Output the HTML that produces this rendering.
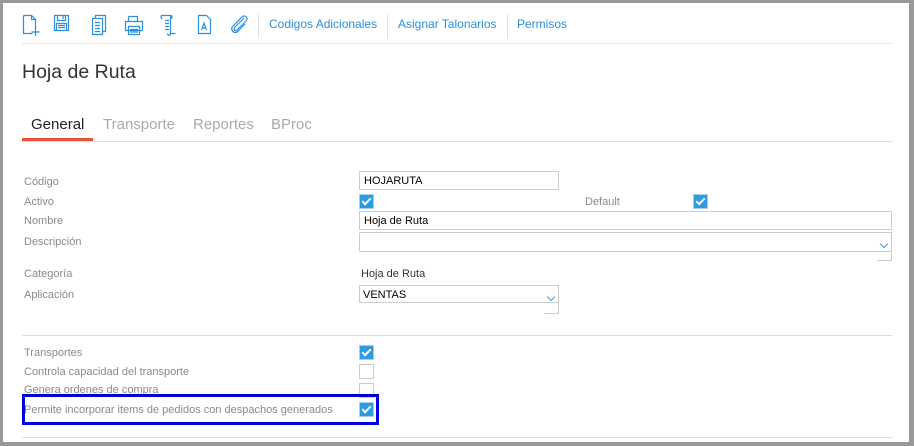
<!DOCTYPE html><html><head><meta charset="utf-8"><style>
body{margin:0;width:914px;height:446px;position:relative;overflow:hidden;background:#fff;font-family:"Liberation Sans",sans-serif}
.a{position:absolute}
.lbl{position:absolute;left:24px;font-size:11px;color:#8a8a8a}
.lnk{position:absolute;top:17px;font-size:12px;color:#2b8ee0}
.sep{position:absolute;top:14px;width:1px;height:24px;background:#e2e2e2}
.cb{position:absolute;width:13px;height:13px;border:1px solid #ccc;background:#fff}
.cb.on{background:#2d9be0;border-color:#a9cfe8}
.cb.on:after{content:"";position:absolute;left:4px;top:1px;width:3px;height:7px;border:solid #fff;border-width:0 2px 2px 0;transform:rotate(45deg)}
.inp{position:absolute;border:1px solid #ccc;font-size:11px;color:#000;box-sizing:border-box;padding:3px 4px}
.chev{position:absolute;width:5px;height:5px;border:solid #4a9ae0;border-width:0 1px 1px 0;transform:rotate(45deg)}
</style></head><body>
<div class="a" style="left:0;top:0;width:914px;height:3px;background:#999"></div>
<div class="a" style="left:0;top:0;width:3px;height:446px;background:#999"></div>
<div class="a" style="right:0;top:0;width:5px;height:446px;background:#999"></div>
<div class="a" style="left:0;top:442px;width:914px;height:4px;background:#999"></div>

<svg class="a" style="left:20px;top:12px" width="240" height="26" viewBox="0 0 240 26" fill="none" stroke="#2b8ee0" stroke-width="1.2">
<path d="M3.5 3.5h8l4 4v9M3.5 3.5v18h9M11.5 3.5v4h4M15.5 16v8M11.5 20h8"/>
<path d="M34.5 3.5h14v15h-14zM37.5 3.5v5h8v-5M43 4v3M36.5 11.5h10v7h-10zM38 13.5h7M38 15.5h7"/>
<path d="M72.5 6.5h10v16h-10zM75.5 6.5v-3h10v16h-3M75 10.5h5M75 13.5h5M75 16.5h5M75 19.5h5"/>
<path d="M108.5 4.5h9v5M108.5 9.5v-5M105.5 9.5h17v9h-17zM108.5 14.5h11v8h-11zM110 17.5h8M110 20h8"/>
<path d="M142.5 3.5h8v18h5M142.5 3.5c-2 0-2 3 0 3M150.5 3.5c2 0 2 3 0 3M150.5 21.5c0 2 -3 2 -3 0M145 8.5h4M145 11.5h4M145 14.5h4M145 17.5h4"/>
<path d="M178.5 3.5h8l4 4v14h-12zM181.5 18l2.5-7 2.5 7M182.3 16h3.4"/>
<path d="M224 6l-9 9c-2 2 0 5 2 3l9-9c3-3-1-7-4-4l-9 9c-4 4 2 9 5 5l7-7"/>
</svg>
<div class="sep" style="left:258px"></div>
<div class="lnk" style="left:269px">Codigos Adicionales</div>
<div class="sep" style="left:387px"></div>
<div class="lnk" style="left:398px">Asignar Talonarios</div>
<div class="sep" style="left:507px"></div>
<div class="lnk" style="left:517px">Permisos</div>
<div class="a" style="left:22px;top:43px;width:870px;height:1px;background:#e8e8e8"></div>

<div class="a" style="left:22px;top:61px;font-size:19.5px;color:#333">Hoja de Ruta</div>

<div class="a" style="left:31px;top:116px;font-size:15px;color:#222">General</div>
<div class="a" style="left:103px;top:116px;font-size:15px;color:#aaa">Transporte</div>
<div class="a" style="left:193px;top:116px;font-size:15px;color:#aaa">Reportes</div>
<div class="a" style="left:271px;top:116px;font-size:15px;color:#aaa">BProc</div>
<div class="a" style="left:22px;top:141px;width:870px;height:1px;background:#ddd"></div>
<div class="a" style="left:22px;top:138px;width:71px;height:3px;background:#e9523a"></div>

<div class="lbl" style="top:176px">Código</div>
<div class="inp" style="left:359px;top:171px;width:200px;height:19px">HOJARUTA</div>
<div class="lbl" style="top:196px">Activo</div>
<div class="cb on" style="left:359px;top:194px"></div>
<div class="a" style="left:585px;top:196px;font-size:11px;color:#8a8a8a">Default</div>
<div class="cb on" style="left:693px;top:194px"></div>
<div class="lbl" style="top:215px">Nombre</div>
<div class="inp" style="left:359px;top:211px;width:533px;height:19px">Hoja de Ruta</div>
<div class="lbl" style="top:236px">Descripción</div>
<div class="a" style="left:359px;top:232px;width:532px;height:18px;border:1px solid #ccc;border-right:0;border-radius:2px 0 0 2px"></div>
<div class="a" style="left:877px;top:232px;width:14px;height:28px;border:1px solid #ccc;border-left:0;border-top:0;border-radius:0 3px 3px 0"></div>
<div class="a" style="left:891px;top:232px;width:1px;height:29px;background:#ccc"></div>
<div class="chev" style="left:881px;top:241px"></div>
<div class="lbl" style="top:268px">Categoría</div>
<div class="a" style="left:361px;top:268px;font-size:11px;color:#333">Hoja de Ruta</div>
<div class="lbl" style="top:289px">Aplicación</div>
<div class="a" style="left:359px;top:285px;width:199px;height:18px;border:1px solid #ccc;border-right:0;font-size:11px;box-sizing:border-box;padding:3px 3px">VENTAS</div>
<div class="a" style="left:544px;top:285px;width:14px;height:28px;border:1px solid #ccc;border-left:0;border-top:0;border-radius:0 3px 3px 0"></div>
<div class="a" style="left:558px;top:285px;width:1px;height:29px;background:#ccc"></div>
<div class="chev" style="left:548px;top:294px"></div>

<div class="a" style="left:22px;top:335px;width:870px;height:1px;background:#ddd"></div>
<div class="lbl" style="top:347px">Transportes</div>
<div class="cb on" style="left:359px;top:345px"></div>
<div class="lbl" style="top:366px">Controla capacidad del transporte</div>
<div class="cb" style="left:359px;top:364px"></div>
<div class="lbl" style="top:384px">Genera ordenes de compra</div>
<div class="cb" style="left:359px;top:383px"></div>
<div class="lbl" style="top:404px">Permite incorporar items de pedidos con despachos generados</div>
<div class="cb on" style="left:359px;top:402px"></div>
<div class="a" style="left:22px;top:394px;width:351px;height:25px;border:3px solid #0000e0"></div>
<div class="a" style="left:22px;top:437px;width:870px;height:1px;background:#ddd"></div>
</body></html>
